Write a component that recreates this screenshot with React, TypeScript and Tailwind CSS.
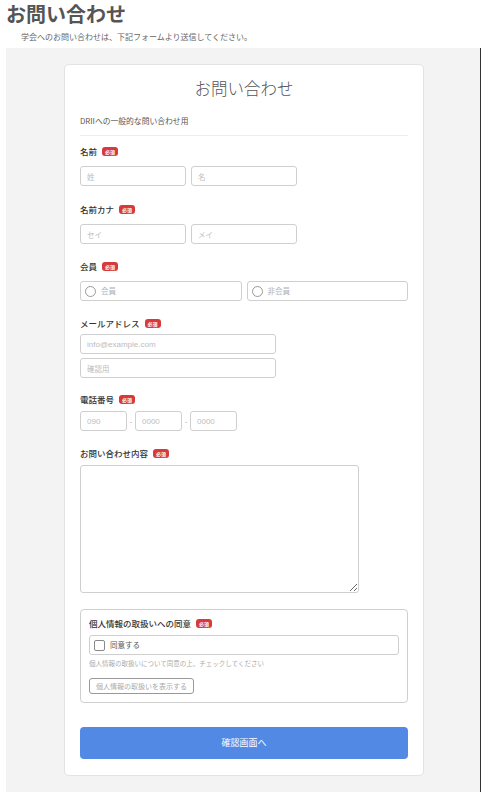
const jp = "font-['Noto_Sans_CJK_JP','Noto_Sans',sans-serif]";

function Badge() {
  return (
    <span className="ml-[5px] inline-flex h-[9px] items-center rounded-[3px] bg-[#d63a3a] px-[3px] text-[5px] font-bold leading-none text-white">
      必須
    </span>
  );
}

function Label({ text, className = "" }: { text: string; className?: string }) {
  return (
    <div className={`flex h-[12px] items-center text-[8.5px] font-medium leading-[12px] text-[#333] ${className}`}>
      {text}
      <Badge />
    </div>
  );
}

function Field({ placeholder, className = "" }: { placeholder: string; className?: string }) {
  return (
    <input
      placeholder={placeholder}
      className={`h-[20px] rounded-[3px] border border-[#cfcfcf] bg-white px-[6px] text-[7.5px] text-[#333] outline-none placeholder:text-[#bdbdbd] ${className}`}
    />
  );
}

function Radio({ text }: { text: string }) {
  return (
    <label className="flex h-[20px] flex-1 items-center gap-[5px] rounded-[3px] border border-[#cfcfcf] px-[4px]">
      <span className="h-[11px] w-[11px] rounded-full border border-[#999]" />
      <span className="text-[7.5px] text-[#b0b0b0]">{text}</span>
    </label>
  );
}

export default function App() {
  return (
    <div className={`h-[792px] w-[484px] overflow-hidden bg-white ${jp}`}>
      <h1 className="pl-[6px] pt-[2px] text-[20px] font-bold leading-[24px] text-[#555]">お問い合わせ</h1>
      <p className="mt-[5px] pl-[21px] text-[8px] leading-[12px] text-[#666]">
        学会へのお問い合わせは、下記フォームより送信してください。
      </p>

      <div className="ml-[6px] mt-[5px] h-[760px] w-[475px] border-r border-[#333] bg-[#f3f3f3] pl-[58px] pt-[16px]">
        <div className="w-[360px] rounded-[5px] border border-[#e3e3e3] bg-white px-[15px] pb-[16px] pt-[13px]">
          <h2 className="text-center text-[16.5px] font-light leading-[20px] text-[#555]">お問い合わせ</h2>
          <div className="mt-[17px] border-b border-[#eee] pb-[8px] text-[7.8px] leading-[12px] text-[#555]">
            DRIIへの一般的な問い合わせ用
          </div>

          <Label text="名前" className="mt-[9px]" />
          <div className="mt-[9px] flex gap-[5px]">
            <Field placeholder="姓" className="w-[106px]" />
            <Field placeholder="名" className="w-[106px]" />
          </div>

          <Label text="名前カナ" className="mt-[17px]" />
          <div className="mt-[9px] flex gap-[5px]">
            <Field placeholder="セイ" className="w-[106px]" />
            <Field placeholder="メイ" className="w-[106px]" />
          </div>

          <Label text="会員" className="mt-[16px]" />
          <div className="mt-[9px] flex gap-[5px]">
            <Radio text="会員" />
            <Radio text="非会員" />
          </div>

          <Label text="メールアドレス" className="mt-[16px]" />
          <div className="mt-[5px] flex flex-col gap-[4px]">
            <Field placeholder="info@example.com" className="w-[196px] font-['Liberation_Sans',sans-serif] text-[8px]" />
            <Field placeholder="確認用" className="w-[196px]" />
          </div>

          <Label text="電話番号" className="mt-[15px]" />
          <div className="mt-[6px] flex items-center">
            <Field placeholder="090" className="w-[47px] font-['Liberation_Sans',sans-serif] text-[8px]" />
            <span className="w-[8px] text-center text-[7px] text-[#999]">-</span>
            <Field placeholder="0000" className="w-[47px] font-['Liberation_Sans',sans-serif] text-[8px]" />
            <span className="w-[8px] text-center text-[7px] text-[#999]">-</span>
            <Field placeholder="0000" className="w-[47px] font-['Liberation_Sans',sans-serif] text-[8px]" />
          </div>

          <Label text="お問い合わせ内容" className="mt-[16px]" />
          <textarea className="mt-[6px] block h-[128px] w-[279px] rounded-[3px] border border-[#cfcfcf] outline-none" />

          <div className="mt-[16px] rounded-[4px] border border-[#cfcfcf] px-[8px] pb-[8px] pt-[7px]">
            <Label text="個人情報の取扱いへの同意" />
            <label className="mt-[6px] flex h-[20px] items-center gap-[5px] rounded-[3px] border border-[#cfcfcf] px-[4px]">
              <span className="h-[11px] w-[11px] rounded-[2px] border border-[#888]" />
              <span className="text-[7.5px] text-[#555]">同意する</span>
            </label>
            <div className="mt-[3px] text-[6.5px] leading-[10px] text-[#aaa]">
              個人情報の取扱いについて同意の上、チェックしてください
            </div>
            <button className="mt-[10px] flex h-[16px] items-center rounded-[3px] border border-[#999] px-[6px] text-[7px] text-[#aaa]">
              個人情報の取扱いを表示する
            </button>
          </div>

          <button className="mt-[24px] flex h-[32px] w-full items-center justify-center rounded-[4px] bg-[#5289e5] text-[9px] text-white">
            確認画面へ
          </button>
        </div>
      </div>
    </div>
  );
}
